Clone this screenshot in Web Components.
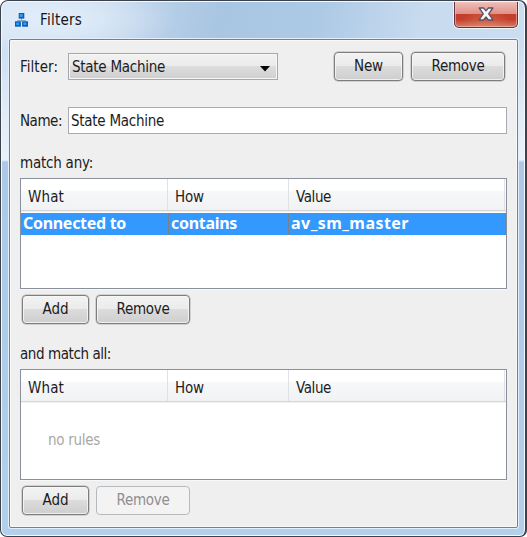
<!DOCTYPE html>
<html lang="en">
<head>
<meta charset="utf-8">
<title>Filters</title>
<style>
html,body{margin:0;width:527px;height:537px;overflow:hidden;background:#fff}
body{font:15px "DejaVu Sans Condensed","DejaVu Sans",sans-serif;font-stretch:condensed;color:#1c1c22}
</style>
</head>
<body>
<filter-window></filter-window>
<script>
const define = (name, html, setup) => {
  const template = document.createElement('template');
  template.innerHTML = html;
  customElements.define(name, class extends HTMLElement {
    connectedCallback() {
      if (this.shadowRoot) return;
      this.attachShadow({mode: 'open'}).append(template.content.cloneNode(true));
      if (setup) setup(this);
    }
  });
};

define('ui-button', `
<style>
:host{display:flex;box-sizing:border-box;height:29px;border:1px solid #7d7d7d;border-radius:4px;align-items:center;justify-content:center;
 background:linear-gradient(#f3f3f3 0,#ebebeb 48%,#dcdcdc 50%,#cecece 100%);box-shadow:inset 0 0 0 1px #f8f8f8cc,0 0 0 .5px #8d8d8d99;padding-bottom:1px;flex:none}
:host([disabled]){border-color:#b5babf;background:#f3f3f3;color:#8f8f8f;box-shadow:none}
</style><slot></slot>`);

define('ui-select', `
<style>
:host{display:flex;box-sizing:border-box;width:210px;height:27px;border:1px solid #a5a6ae;align-items:center;justify-content:space-between;
 padding:0 7px 0 3px;background:linear-gradient(#f2f2f2 0,#ebebeb 46%,#dddddd 50%,#cfcfcf 100%);box-shadow:inset 0 0 0 1px #f6f6f6}
svg{display:block;margin-top:4px}
</style><slot></slot><svg width="10" height="6"><path d="M0 0H10L5 5.5Z" fill="#050505"/></svg>`);

define('ui-field', `
<style>
:host{display:flex;box-sizing:border-box;width:439px;height:27px;border:1px solid #a9abb4;background:#fff;align-items:center;padding:1px 0 0 2px}
</style><slot></slot>`);

define('close-button', `
<style>
:host{display:flex;box-sizing:border-box;width:64px;height:26px;margin-right:2px;border:1px solid #64323a;border-top:0;border-radius:0 0 5px 5px;
 background:radial-gradient(ellipse at 50% 110%,#e58d6588,transparent 60%),linear-gradient(#efbeb8 0,#df938b 46%,#c43d2c 50%,#c3402e 70%,#d77b67 100%);
 box-shadow:inset 0 0 0 1px #f3c4bd99,0 0 0 1px #eef6fd;align-items:center;justify-content:center}
svg{display:block;margin-top:-2px}
</style>
<svg width="16" height="14" viewBox="0 0 16 14"><path d="M1.2 1H5.6L8 3.8L10.4 1H14.8L10.7 6.8L15 13H10.4L8 10L5.6 13H1L5.3 6.8Z" fill="#f8f8f8" stroke="#59526a" stroke-width="1.3" stroke-linejoin="round"/></svg>`);

define('title-bar', `
<style>
:host{display:flex;height:36px;align-items:flex-start;justify-content:space-between;margin-right:-2px}
.left{display:flex;padding:8px 0 0 7px;gap:12px;color:#15151c}
svg{display:block;margin-top:3px}
</style>
<div class="left">
<svg width="13" height="15" viewBox="0 0 13 15">
<path d="M6.5 5V9M2.5 9V7.5H10.5V9" fill="none" stroke="#8fa3ba"/>
<g fill="#0a5cb8"><rect x="3.7" width="5.6" height="5.6"/><rect y="8.3" width="5.9" height="5.4"/><rect x="7.1" y="8.3" width="5.9" height="5.4"/></g>
<g fill="#2b9df2"><rect x="4.7" y="1" width="3" height="3"/><rect x="1.2" y="9.5" width="3" height="2.6"/><rect x="8.4" y="9.5" width="3" height="2.6"/></g>
</svg><slot></slot></div><close-button></close-button>`);

define('rule-table', `
<style>
:host{display:flex;flex-direction:column;box-sizing:border-box;width:487px;height:111px;border:1px solid #8b919c;background:#fff;box-shadow:0 1px #f8f8f8}
.head{display:grid;grid-template-columns:147px 121px 1fr;height:31px;flex:none;background:linear-gradient(#fff 0 36%,#f7f8fa 40%,#f1f2f4);border-bottom:1px solid #d5d5d5}
.head div{border-right:1px solid #dfe1e4;padding:8px 0 0 7px}
.head div:last-child{margin-right:1px}
.body{border-top:1px solid #f2f2f2;flex:1}
</style>
<div class="head"><div><ui-text w="36">What</ui-text></div><div><ui-text w="29">How</ui-text></div><div><ui-text w="35">Value</ui-text></div></div>
<div class="body"><slot></slot></div>`);

define('rule-cell', `
<style>:host{display:block;border-right:1px solid #77828c;padding-left:2px}</style><slot></slot>`);

define('rule-row', `
<style>
:host{display:grid;grid-template-columns:148px 120px 1fr;height:22px;margin-top:1px;background:#3399ff;color:#fff;font-family:"Noto Sans","DejaVu Sans",sans-serif;font-size:16px;font-stretch:normal;font-weight:bold}
</style><slot></slot>`);

define('filter-window', `
<style>
:host{display:block;box-sizing:border-box;width:527px;height:537px;border:1px solid #3b424c;border-right-width:2px;border-bottom-width:1px;border-radius:8px 8px 7px 7px;padding:1px 7px 7px 7px;
 background:radial-gradient(ellipse 120px 40px at 55px 18px,#e3eefa 0,#e3eefa88 50%,transparent 100%),
 linear-gradient(100deg,#d5e3f3 0,#c5d8ed 20%,#a8c5e2 42%,#acc9e5 60%,#c8dbef 80%,#cbddf0 100%) 0 0/100% 39px no-repeat,
 linear-gradient(#cbddf1 39px,#e3edf8 120px,#eaf1f9 159px,#abc9e7 161px,#b2cfeb 100%);box-shadow:inset 0 0 0 1px #f5f9fd}
.frame{box-sizing:border-box;width:509px;height:489px;border:1px solid #76808d;border-radius:2px;background:#efefef;box-shadow:0 0 0 1px #e3f0fc,inset 0 0 0 1px #f9f9f9;padding:12px 0 0 10px;margin:1px 0 0 1px;display:flex;flex-direction:column}
.line{display:flex;align-items:center}
.top{height:29px}
.top ui-select{margin-left:10px}
.new{margin-left:56px}
.del{margin-left:8px}
.name{height:28px;margin-top:25px}
.name>ui-text{margin-top:2px}
.name ui-field{margin-left:6px}
.cap{margin-top:19px}
rule-table{margin-top:5px}
.acts{display:flex;gap:7px;padding:6px 0 0 2px}
.second{margin-top:20px}
.empty{padding:27px 0 0 27px;color:#a8a8a8}
</style>
<title-bar><ui-text w="42">Filters</ui-text></title-bar>
<div class="frame">
<div class="line top"><ui-text w="38">Filter:</ui-text><ui-select><ui-text w="93">State Machine</ui-text></ui-select>
<ui-button class="new" style="width:69px"><ui-text w="29">New</ui-text></ui-button><ui-button class="del" style="width:94px"><ui-text w="53">Remove</ui-text></ui-button></div>
<div class="line name"><ui-text w="42">Name:</ui-text><ui-field><ui-text w="93">State Machine</ui-text></ui-field></div>
<ui-text class="cap" w="73">match any:</ui-text>
<rule-table><rule-row><rule-cell><ui-text w="103">Connected to</ui-text></rule-cell><rule-cell><ui-text w="66">contains</ui-text></rule-cell><rule-cell><ui-text w="118">av_sm_master</ui-text></rule-cell></rule-row></rule-table>
<div class="acts"><ui-button style="width:67px"><ui-text w="26">Add</ui-text></ui-button><ui-button style="width:94px"><ui-text w="53">Remove</ui-text></ui-button></div>
<ui-text class="second" w="91">and match all:</ui-text>
<rule-table><div class="empty"><ui-text w="52">no rules</ui-text></div></rule-table>
<div class="acts"><ui-button style="width:67px"><ui-text w="26">Add</ui-text></ui-button><ui-button disabled style="width:94px"><ui-text w="53">Remove</ui-text></ui-button></div>
</div>`);

/* One line of text, tracked so that it fills the width given in pixels.
   Defined last, so that every ancestor already has its own styles. */
define('ui-text', `<style>
:host{display:block;white-space:nowrap;line-height:20px;height:20px;flex:none}
span{display:inline-block}
</style><span><slot></slot></span>`, el => {
  const span = el.shadowRoot.querySelector('span');
  const target = +el.getAttribute('w');
  const natural = span.getBoundingClientRect().width;
  span.style.letterSpacing = (target - natural) / el.textContent.length + 'px';
  el.style.width = target + 'px';
});
</script>
</body>
</html>
